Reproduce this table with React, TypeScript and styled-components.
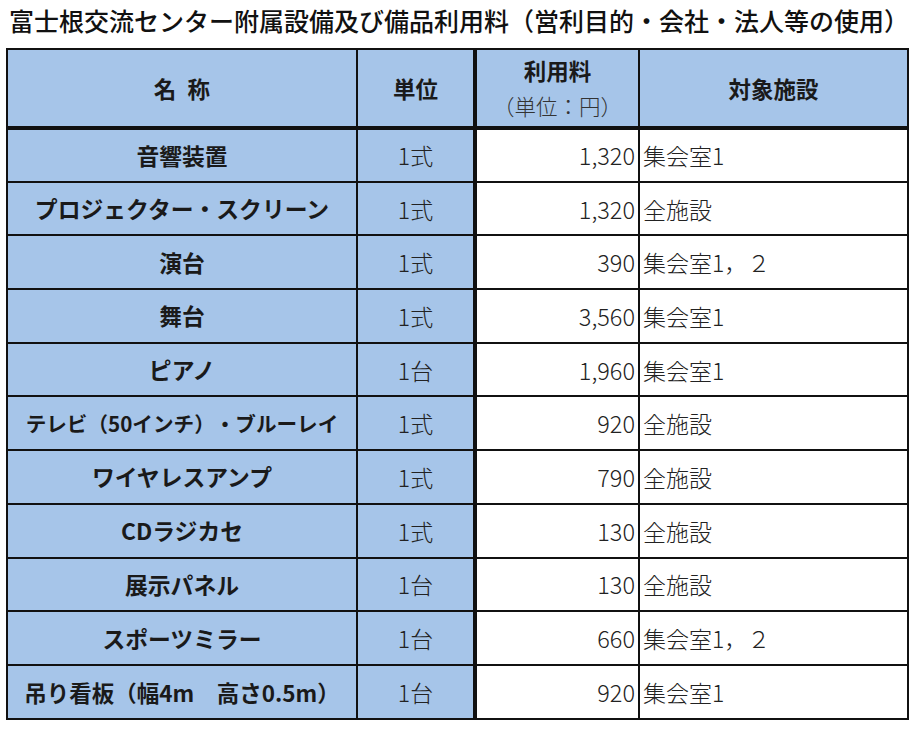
import React from "react";
import styled, { createGlobalStyle } from "styled-components";

const Global = createGlobalStyle`
  html, body { margin: 0; padding: 0; background: #ffffff; }
  body {
    font-family: "Noto Sans CJK JP", "Noto Sans", sans-serif;
    color: #111;
    text-spacing-trim: space-all;
  }
`;

const Page = styled.div`
  width: 917px;
  height: 729px;
  background: #fff;
  padding: 5px 0 0 6px;
  box-sizing: border-box;
`;

const Title = styled.h1`
  margin: 0 0 12px 3px;
  font-size: 25px;
  line-height: 31px;
  font-weight: 500;
  letter-spacing: 0;
  white-space: nowrap;
  color: #111;
  text-spacing-trim: space-all;
`;

const Table = styled.table`
  border-collapse: collapse;
  table-layout: fixed;
  width: 901px;
  border: 2px solid #111;
`;

const HeadRow = styled.tr`
  height: 79px;
  background: #a6c5e9;
  border-bottom: 4px solid #111;
`;

const BodyRow = styled.tr`
  height: 53.7px;
  border-bottom: 2px solid #111;
`;

const HeadCell = styled.th<{ $thick?: boolean }>`
  border-left: 2px solid #111;
  border-right: ${(p) => (p.$thick ? "4px" : "2px")} solid #111;
  font-size: 22.5px;
  font-weight: 700;
  text-align: center;
  vertical-align: middle;
  padding: 0;
  line-height: 36px;
  color: #1a1a1a;
  text-spacing-trim: space-all;
`;

const SubLabel = styled.span`
  display: block;
  font-weight: 300;
  font-size: 21.5px;
  color: #333;
`;

const NameCell = styled.td<{ $size?: number }>`
  background: #a6c5e9;
  border-right: 2px solid #111;
  text-align: center;
  font-size: ${(p) => p.$size ?? 22.8}px;
  font-weight: 700;
  padding: 0;
  white-space: nowrap;
  color: #1a1a1a;
  text-spacing-trim: space-all;
`;

const UnitCell = styled.td`
  background: #a6c5e9;
  border-right: 4px solid #111;
  text-align: center;
  font-size: 23px;
  font-weight: 300;
  padding: 0;
  color: #222;
`;

const FeeCell = styled.td`
  background: #fff;
  border-right: 2px solid #111;
  text-align: right;
  font-size: 23.5px;
  font-weight: 300;
  padding: 0 3px 0 0;
  color: #222;
`;

const PlaceCell = styled.td`
  background: #fff;
  text-align: left;
  font-size: 23px;
  font-weight: 300;
  padding: 0 0 0 3px;
  white-space: nowrap;
  color: #222;
  text-spacing-trim: space-all;
`;

type Row = { name: string; unit: string; fee: string; place: string; size?: number };

const rows: Row[] = [
  { name: "音響装置", unit: "1式", fee: "1,320", place: "集会室1" },
  { name: "プロジェクター・スクリーン", unit: "1式", fee: "1,320", place: "全施設" },
  { name: "演台", unit: "1式", fee: "390", place: "集会室1，２" },
  { name: "舞台", unit: "1式", fee: "3,560", place: "集会室1" },
  { name: "ピアノ", unit: "1台", fee: "1,960", place: "集会室1" },
  { name: "テレビ（50インチ）・ブルーレイ", unit: "1式", fee: "920", place: "全施設", size: 20.6 },
  { name: "ワイヤレスアンプ", unit: "1式", fee: "790", place: "全施設" },
  { name: "CDラジカセ", unit: "1式", fee: "130", place: "全施設" },
  { name: "展示パネル", unit: "1台", fee: "130", place: "全施設" },
  { name: "スポーツミラー", unit: "1台", fee: "660", place: "集会室1，２" },
  { name: "吊り看板（幅4m　高さ0.5m）", unit: "1台", fee: "920", place: "集会室1", size: 22.5 },
];

export default function App() {
  return (
    <Page>
      <Global />
      <Title>富士根交流センター附属設備及び備品利用料（営利目的・会社・法人等の使用）</Title>
      <Table>
        <colgroup>
          <col style={{ width: 350 }} />
          <col style={{ width: 118 }} />
          <col style={{ width: 164 }} />
          <col style={{ width: 269 }} />
        </colgroup>
        <thead>
          <HeadRow>
            <HeadCell>名&ensp;称</HeadCell>
            <HeadCell $thick>単位</HeadCell>
            <HeadCell>
              利用料
              <SubLabel>（単位：円）</SubLabel>
            </HeadCell>
            <HeadCell>対象施設</HeadCell>
          </HeadRow>
        </thead>
        <tbody>
          {rows.map((r) => (
            <BodyRow key={r.name}>
              <NameCell $size={r.size}>{r.name}</NameCell>
              <UnitCell>{r.unit}</UnitCell>
              <FeeCell>{r.fee}</FeeCell>
              <PlaceCell>{r.place}</PlaceCell>
            </BodyRow>
          ))}
        </tbody>
      </Table>
    </Page>
  );
}
